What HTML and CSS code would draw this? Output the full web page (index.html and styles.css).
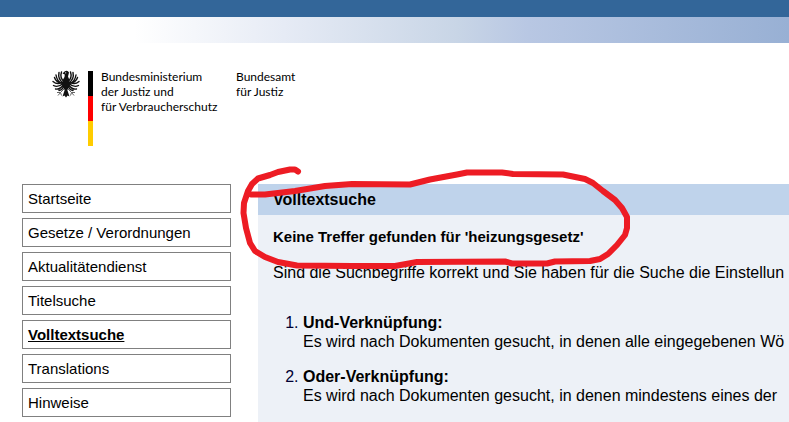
FILE: index.html
```html
<!DOCTYPE html>
<html lang="de">
<head>
<meta charset="utf-8">
<title>Volltextsuche</title>
<link rel="stylesheet" href="styles.css">
</head>
<body>
<div class="topbar"></div>
<div class="fade"></div>
<header class="brand">
  <svg class="eagle" viewBox="0 0 28 28" aria-hidden="true">
    <g fill="none" stroke="#111" stroke-width="1.400" stroke-linecap="round">
      <path d="M12 11.500Q7.500 8 9.500 2M11.500 13Q5.500 9.500 7 2.500M11 14Q5 12 4 5M10 12.500Q4 12.500 2.500 7.500M10 12.500Q5 15 1 11.500M11 13.500Q6 18 1.500 15.500M11.500 14.500Q8 20 3.500 19M12 16Q10 20.500 7 20.500"/>
      <path d="M16 11.500Q20.500 8 18.500 2M16.500 13Q22.500 9.500 21 2.500M17 14Q23 12 24 5M18 12.500Q24 12.500 25.500 7.500M18 12.500Q23 15 27 11.500M17 13.500Q22 18 26.500 15.500M16.500 14.500Q20 20 24.500 19M16 16Q18 20.500 21 20.500"/>
    </g>
    <path fill="#111" d="M10.500 3.500L12.500 1.500Q15.500-.3 17 2.500L16 6.500Q18 10 17.500 14Q17 18 15.300 20L17.500 26.500L15.500 25.500L14 27.500L12.500 25.500L10.500 26.500L12.700 20Q11 18 10.500 14Q10 10 12.500 7L12.800 4.500Z"/>
    <path fill="none" stroke="#666" stroke-width="1" d="M12 19L8.500 22.500L5 22.500M8.500 22.500L6 25.500M8.500 22.500L9.500 25.500M16 19L19.500 22.500L23 22.500M19.500 22.500L22 25.500M19.500 22.500L18.500 25.500"/>
    <circle cx="13.700" cy="2.800" r=".6" fill="#fff"/>
  </svg>
  <div class="flag"></div>
  <p class="ministry">Bundesministerium<br>der Justiz und<br>für Verbraucherschutz</p>
  <p class="office">Bundesamt<br>für Justiz</p>
</header>
<div class="columns">
  <nav class="menu">
    <a href="#">Startseite</a>
    <a href="#">Gesetze / Verordnungen</a>
    <a href="#">Aktualitätendienst</a>
    <a href="#">Titelsuche</a>
    <a href="#" class="active" aria-current="page">Volltextsuche</a>
    <a href="#">Translations</a>
    <a href="#">Hinweise</a>
  </nav>
  <main class="content">
    <h1>Volltextsuche</h1>
    <h2>Keine Treffer gefunden für 'heizungsgesetz'</h2>
    <p>Sind die Suchbegriffe korrekt und Sie haben für die Suche die Einstellun</p>
    <ol>
      <li><strong>Und-Verknüpfung:</strong><br>Es wird nach Dokumenten gesucht, in denen alle eingegebenen Wö</li>
      <li><strong>Oder-Verknüpfung:</strong><br>Es wird nach Dokumenten gesucht, in denen mindestens eines der</li>
    </ol>
  </main>
</div>
<svg class="marker" width="400" height="110" viewBox="235 162 400 110" aria-hidden="true">
  <path d="M298 171.500L295 169.500L290 169.500L278 172L270 175L258 178.500L252 184L248 191L244 203L243.500 213L246 228L250 243L255 251L265 257L278 262L297 265.500L352 266L395 266L417 262L505 261.500L512 263.500L547 263.500L555 261.500L590 261L600 259L608 254L617 245L625 235L627 228L627 217L622 208L615 200L603 191L593 183L585 179L563 174.500L513 174L502 172.500L467 172.500L457 174.500L430 179.500L422 181.500L410 184.500L352 184L325 186L295 191L265 194.500L251 194.500"/>
</svg>
</body>
</html>
```
FILE: styles.css
```css
* {
  box-sizing: border-box;
}

body {
  display: flex;
  flex-direction: column;
  min-height: 100vh;
  margin: 0;
  background: #fff;
  color: #000;
  font-family: "Liberation Sans", Arial, sans-serif;
  font-size: 16px;
  line-height: 19px;
}

h1, h2, p, ol {
  margin: 0;
}

.topbar {
  height: 17px;
  background: #336699;
}

.fade {
  height: 26px;
  background: linear-gradient(to right, #fff 17%, #e6ebf5 36%, #c8d5e6 58%, #b8c7e3 67%, #98b0d4 100%);
}

.brand {
  display: flex;
  align-items: flex-start;
  padding: 26px 0 38px 52px;
  font-family: Lato, sans-serif;
  font-size: 12px;
  line-height: 15px;
  color: #000;
  white-space: nowrap;
}

.eagle {
  width: 28px;
  height: 28px;
  margin-top: 1px;
}

.flag {
  width: 5px;
  height: 75px;
  margin: 2px 8px 0;
  background: linear-gradient(#000 25px, #f00 25px 50px, #fc0 50px);
}

.ministry {
  width: 135px;
}

.columns {
  display: flex;
  flex: 1;
  gap: 27px;
  padding-left: 22px;
}

.menu {
  display: flex;
  flex: none;
  flex-direction: column;
  gap: 5px;
  width: 209px;
}

.menu a {
  padding: 4px 5px;
  border: 1px solid #808080;
  color: #000;
  font-size: 15px;
  text-decoration: none;
}

.menu .active {
  font-weight: bold;
  text-decoration: underline;
}

.content {
  flex: 1;
  min-width: 0;
  overflow: hidden;
  background: #edf1f7;
  white-space: nowrap;
}

h1 {
  padding: 6px 15px;
  background: #bfd3eb;
  font-size: 16px;
  line-height: 19px;
}

h2 {
  padding: 12px 15px 0;
  font-size: 15px;
  line-height: 19px;
}

.content p {
  padding: 17px 0 0 15px;
}

ol {
  padding: 31px 0 0 45px;
}

li + li {
  margin-top: 16px;
}

li::marker {
  color: #003;
}

.marker {
  position: absolute;
  top: 162px;
  left: 235px;
  fill: none;
  stroke: #ed1c24;
  stroke-width: 6px;
  stroke-linecap: round;
  stroke-linejoin: round;
  pointer-events: none;
}
```
